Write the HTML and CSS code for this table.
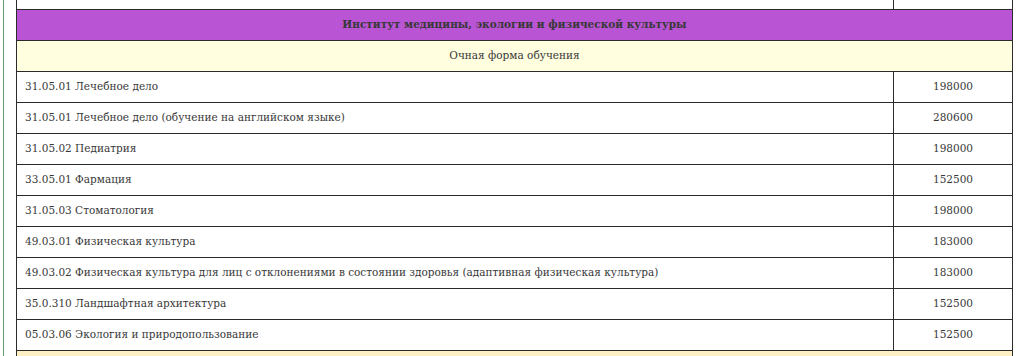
FILE: index.html
```html
<!DOCTYPE html>
<html lang="ru">
<head>
<meta charset="utf-8">
<title>Стоимость обучения</title>
<link rel="stylesheet" href="styles.css">
</head>
<body>
<div class="page">
  <table class="prices">
    <colgroup><col class="c-name"><col class="c-price"></colgroup>
    <tbody>
      <tr class="cut"><td></td><td></td></tr>
      <tr class="inst"><td colspan="2">Институт медицины, экологии и физической культуры</td></tr>
      <tr class="form"><td colspan="2">Очная форма обучения</td></tr>
      <tr><td>31.05.01 Лечебное дело</td><td class="num">198000</td></tr>
      <tr><td>31.05.01 Лечебное дело (обучение на английском языке)</td><td class="num">280600</td></tr>
      <tr><td>31.05.02 Педиатрия</td><td class="num">198000</td></tr>
      <tr><td>33.05.01 Фармация</td><td class="num">152500</td></tr>
      <tr><td>31.05.03 Стоматология</td><td class="num">198000</td></tr>
      <tr><td>49.03.01 Физическая культура</td><td class="num">183000</td></tr>
      <tr><td>49.03.02 Физическая культура для лиц с отклонениями в состоянии здоровья (адаптивная физическая культура)</td><td class="num">183000</td></tr>
      <tr><td>35.0.310 Ландшафтная архитектура</td><td class="num">152500</td></tr>
      <tr><td>05.03.06 Экология и природопользование</td><td class="num">152500</td></tr>
      <tr class="next"><td colspan="2"></td></tr>
    </tbody>
  </table>
</div>
</body>
</html>
```
FILE: styles.css
```css
html, body {
  margin: 0;
  padding: 0;
  background: #ffffff;
  overflow: hidden;
}
body {
  font-family: "DejaVu Serif", "Liberation Serif", serif;
  font-size: 10.5px;
  color: #383838;
}
.page {
  margin-left: 3px;
  border-left: 1px solid #6e9e72;
  padding-left: 12px;
  height: 356px;
  overflow: hidden;
}
.prices {
  border-collapse: collapse;
  width: 996px;
  table-layout: fixed;
}
.c-name { width: 877px; }
.c-price { width: 119px; }
.prices td {
  border: 1px solid #2b2b2b;
  height: 31px;
  padding: 0 8px 2px;
  box-sizing: border-box;
  line-height: 14px;
  vertical-align: middle;
}
.prices .cut td {
  height: 9px;
  padding: 0;
  border-top: none;
}
.num { text-align: center; }
.inst td {
  background: #b955d4;
  text-align: center;
  font-weight: bold;
}
.form td {
  background: #fffedf;
  text-align: center;
}
.next td {
  background: #fdf0c4;
}
```
